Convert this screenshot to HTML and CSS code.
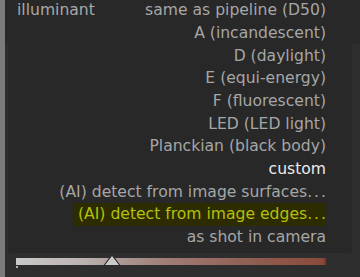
FILE: index.html
```html
<!DOCTYPE html>
<html>
<head>
<meta charset="utf-8">
<link rel="stylesheet" href="styles.css">
</head>
<body>
<div class="app">
  <div class="sidebar"></div>
  <div class="main">
    <div class="header"></div>
    <div class="module">
      <div class="slider-wrap">
        <div class="slider">
          <div class="marker" style="left: 87px;"></div>
        </div>
        <div class="dot"></div>
      </div>
    </div>
  </div>
  <div class="popup">
    <div class="row first"><span class="label">illuminant</span><span class="val">same as pipeline (D50)</span></div>
    <div class="row"><span class="val">A (incandescent)</span></div>
    <div class="row"><span class="val">D (daylight)</span></div>
    <div class="row"><span class="val">E (equi-energy)</span></div>
    <div class="row"><span class="val">F (fluorescent)</span></div>
    <div class="row"><span class="val">LED (LED light)</span></div>
    <div class="row"><span class="val">Planckian (black body)</span></div>
    <div class="row"><span class="val selected">custom</span></div>
    <div class="row"><span class="val">(AI) detect from image surfaces<span class="dots">...</span></span></div>
    <div class="row"><span class="val hover">(AI) detect from image edges<span class="dots">...</span></span></div>
    <div class="row"><span class="val">as shot in camera</span></div>
  </div>
</div>
</body>
</html>
```

FILE: styles.css
```css
* { box-sizing: border-box; }
html, body { margin: 0; padding: 0; }
body {
  width: 360px;
  height: 277px;
  overflow: hidden;
  background: #2e2e2e;
  font-family: "DejaVu Sans", "Noto Sans", sans-serif;
  font-size: 15.6px;
}
.app {
  position: relative;
  display: flex;
  width: 360px;
  height: 277px;
}
.sidebar {
  width: 5px;
  background: #7b7b7b;
}
.main {
  flex: 1;
  display: flex;
  flex-direction: column;
}
.header {
  height: 44px;
  background: #282828;
}
.module {
  flex: 1;
  background: #2e2e2e;
  display: flex;
  flex-direction: column;
  justify-content: flex-end;
  padding: 0 34px 8px 11px;
}
.slider-wrap {
  display: flex;
  flex-direction: column;
}
.slider {
  position: relative;
  height: 7px;
  background: linear-gradient(to right, #cacaca 0%, #bdb5b3 20%, #ab9692 35%, #9e7b73 50%, #915f53 75%, #8a4a3b 99%, #7a3024 100%);
}
.marker {
  position: absolute;
  bottom: -1px;
  width: 0;
  height: 0;
  border-left: 9px solid transparent;
  border-right: 9px solid transparent;
  border-bottom: 12px solid #2a2a2a;
}
.marker::after {
  content: "";
  position: absolute;
  left: -7px;
  top: 2px;
  width: 0;
  height: 0;
  border-left: 7px solid transparent;
  border-right: 7px solid transparent;
  border-bottom: 9px solid #cbcbcb;
}
.dot {
  width: 2px;
  height: 2px;
  margin-top: 1px;
  margin-bottom: 1px;
  background: #b0b0b0;
}
.popup {
  position: absolute;
  left: 8px;
  top: -1px;
  width: 344px;
  height: 254px;
  background: #282828;
  border-radius: 0 0 4px 4px;
  padding: 0 26px 0 9px;
}
.row {
  height: 22.7px;
  display: flex;
  align-items: center;
  justify-content: flex-end;
  color: #a6a6a6;
  white-space: nowrap;
}
.row.first {
  justify-content: space-between;
}
.label {
  color: #a8a8a8;
}
.val.selected {
  color: #ebebeb;
}
.val.hover {
  color: #b4c00c;
  background: #2c2c00;
  padding-left: 4px;
  line-height: 23px;
}
.dots {
  letter-spacing: 2px;
  margin-right: -2px;
}
```
